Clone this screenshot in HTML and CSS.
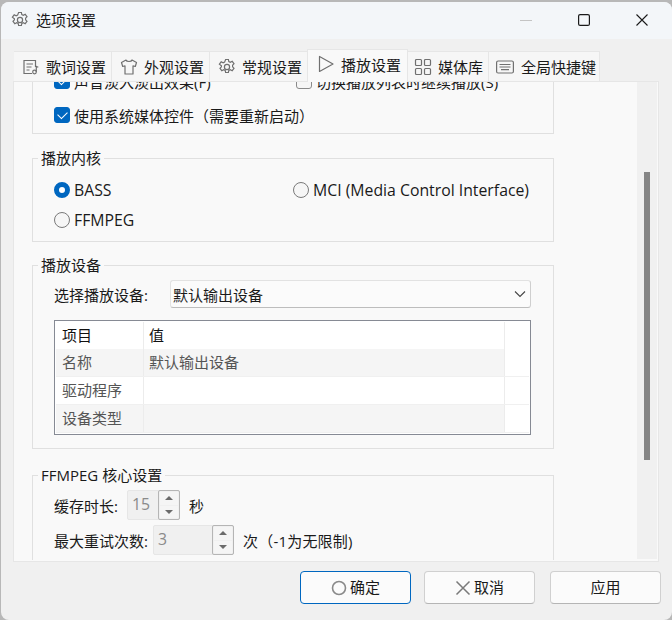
FILE: index.html

```html
<!DOCTYPE html>
<html lang="zh-CN">
<head>
    <meta charset="UTF-8">
    <title>选项设置</title>
    <link rel="stylesheet" href="styles.css">
</head>
<body>
    <div class="window">
        <div class="titlebar">
            <svg class="title-icon" width="18" height="18" viewBox="0 0 18 18"><path d="M7.600 1.500h2.800l.4 2.100 1.500.7 1.900-1 1.800 2.400-1.400 1.500v1.600l1.400 1.500-1.800 2.400-1.900-1-1.500.7-.4 2.100H7.600l-.4-2.100-1.500-.7-1.900 1-1.800-2.400 1.400-1.500V7.700L1.400 6.200l1.800-2.400 1.900 1 1.500-.7z" fill="none" stroke="#707070" stroke-width="1.200"/><circle cx="9" cy="9" r="2.600" fill="none" stroke="#707070" stroke-width="1.200"/></svg>
            <span class="title-text">选项设置</span>
            <div class="win-buttons">
                <svg width="12" height="12" viewBox="0 0 12 12"><path d="M0 6.500h12" stroke="#c4c4c4" stroke-width="1"/></svg>
                <svg width="12" height="12" viewBox="0 0 12 12"><rect x=".6" y=".6" width="10.800" height="10.800" rx="1.500" fill="none" stroke="#1a1a1a" stroke-width="1.200"/></svg>
                <svg width="12" height="12" viewBox="0 0 12 12"><path d="M.5.5l11 11M11.500.5l-11 11" stroke="#1a1a1a" stroke-width="1.100"/></svg>
            </div>
        </div>

        <div class="tabs">
            <div class="tab">
                <svg width="18" height="18" viewBox="0 0 18 18" fill="none" stroke="#707070" stroke-width="1.200"><path d="M10 15.500H2V2.500h11.500V9M4.500 6h6.500M4.500 9h5M4.500 12h3"/><circle cx="12.500" cy="14" r="1.800"/><path d="M14.300 14V8.500l2 .8"/></svg>
                <span>歌词设置</span>
            </div>
            <div class="tab">
                <svg width="18" height="18" viewBox="0 0 18 18" fill="none" stroke="#707070" stroke-width="1.200"><path d="M6 2L1.500 4.500l1.200 4 2.300-.6V16h8V7.900l2.300.6 1.200-4L12 2c-.5 2-5.500 2-6 0z" stroke-linejoin="round"/></svg>
                <span>外观设置</span>
            </div>
            <div class="tab">
                <svg width="18" height="18" viewBox="0 0 18 18"><path d="M7.600 1.500h2.800l.4 2.100 1.500.7 1.900-1 1.800 2.400-1.400 1.500v1.600l1.400 1.500-1.800 2.400-1.900-1-1.500.7-.4 2.100H7.600l-.4-2.100-1.500-.7-1.900 1-1.800-2.400 1.400-1.500V7.700L1.400 6.200l1.800-2.400 1.900 1 1.500-.7z" fill="none" stroke="#707070" stroke-width="1.200"/><circle cx="9" cy="9" r="2.600" fill="none" stroke="#707070" stroke-width="1.200"/></svg>
                <span>常规设置</span>
            </div>
            <div class="tab tab-active">
                <svg width="18" height="18" viewBox="0 0 18 18" fill="none" stroke="#707070" stroke-width="1.200"><path d="M2.500 1.500v15L16 9z" stroke-linejoin="round"/></svg>
                <span>播放设置</span>
            </div>
            <div class="tab tab-lib">
                <svg width="18" height="18" viewBox="0 0 18 18" fill="none" stroke="#707070" stroke-width="1.200"><rect x="1.500" y="1.500" width="6" height="6" rx="1"/><rect x="10.500" y="1.500" width="6" height="6" rx="1"/><rect x="1.500" y="10.500" width="6" height="6" rx="1"/><rect x="10.500" y="10.500" width="6" height="6" rx="1"/></svg>
                <span>媒体库</span>
            </div>
            <div class="tab tab-keys">
                <svg width="18" height="18" viewBox="0 0 18 18" fill="none" stroke="#707070" stroke-width="1.200"><rect x=".6" y="3" width="16.800" height="12" rx="1.500"/><path d="M3.500 6.500h11M3.500 9h11M5 11.700h8"/></svg>
                <span>全局快捷键</span>
            </div>
        </div>

        <div class="panel">
            <div class="scroll-area">
                <div class="content">
                    <div class="group group-first">
                        <div class="check-row check-row-cut">
                            <label class="check check-left"><i class="box box-on"></i>声音淡入淡出效果(F)</label>
                            <label class="check"><i class="box"></i>切换播放列表时继续播放(S)</label>
                        </div>
                        <label class="check"><i class="box box-on"></i>使用系统媒体控件（需要重新启动）</label>
                    </div>

                    <div class="group group-core">
                        <span class="legend">播放内核</span>
                        <div class="radio-row">
                            <label class="radio radio-left"><i class="dot dot-on"></i>BASS</label>
                            <label class="radio"><i class="dot"></i>MCI (Media Control Interface)</label>
                        </div>
                        <div class="radio-row">
                            <label class="radio"><i class="dot"></i>FFMPEG</label>
                        </div>
                    </div>

                    <div class="group group-device">
                        <span class="legend">播放设备</span>
                        <div class="device-row">
                            <span class="device-label">选择播放设备:</span>
                            <div class="combo">
                                <span>默认输出设备</span>
                                <svg width="12" height="8" viewBox="0 0 12 8"><path d="M1 1.500l5 5 5-5" fill="none" stroke="#444" stroke-width="1.100"/></svg>
                            </div>
                        </div>
                        <div class="list">
                            <div class="list-row list-head"><span class="col-a">项目</span><span class="col-b">值</span><span class="col-c"></span></div>
                            <div class="list-row alt"><span class="col-a">名称</span><span class="col-b">默认输出设备</span><span class="col-c"></span></div>
                            <div class="list-row"><span class="col-a">驱动程序</span><span class="col-b"></span><span class="col-c"></span></div>
                            <div class="list-row alt"><span class="col-a">设备类型</span><span class="col-b"></span><span class="col-c"></span></div>
                        </div>
                    </div>

                    <div class="group group-ffmpeg">
                        <span class="legend">FFMPEG 核心设置</span>
                        <div class="spin-row">
                            <span class="spin-label-short">缓存时长:</span>
                            <div class="spin spin-short"><span class="spin-value">15</span><div class="spin-btns"><b><i class="up"></i></b><b><i class="down"></i></b></div></div>
                            <span class="spin-unit">秒</span>
                        </div>
                        <div class="spin-row spin-row-2">
                            <span class="spin-label-long">最大重试次数:</span>
                            <div class="spin spin-long"><span class="spin-value">3</span><div class="spin-btns"><b><i class="up"></i></b><b><i class="down"></i></b></div></div>
                            <span class="spin-unit spin-unit-wide">次（-1为无限制)</span>
                        </div>
                    </div>
                </div>
            </div>
            <div class="scrollbar"><div class="thumb"></div></div>
        </div>

        <div class="footer">
            <button class="btn btn-default">
                <svg width="16" height="16" viewBox="0 0 16 16"><circle cx="8" cy="8" r="6.500" fill="none" stroke="#8a8a8a" stroke-width="1.600"/></svg>
                确定
            </button>
            <button class="btn">
                <svg width="16" height="16" viewBox="0 0 16 16"><path d="M1.500 1.500l13 13M14.500 1.500l-13 13" stroke="#7a7a7a" stroke-width="1.500"/></svg>
                取消
            </button>
            <button class="btn btn-apply">应用</button>
        </div>
    </div>
</body>
</html>
```

FILE: styles.css

```css
* {
    box-sizing: border-box;
}
html, body {
    margin: 0;
    height: 100%;
    overflow: hidden;
}
body {
    background-color: #b8b8b8;
    font-family: "Open Sans", "Noto Sans CJK SC", sans-serif;
    font-size: 15px;
    color: #1a1a1a;
    padding: 2px 0 0 1px;
}
.window {
    height: 618px;
    background-color: #f0f0f0;
    border-radius: 8px;
    display: flex;
    flex-direction: column;
    overflow: hidden;
}
.titlebar {
    height: 37px;
    flex: none;
    background-color: #f3f6f9;
    display: flex;
    align-items: center;
    padding: 0 0 2px 10px;
}
.title-text {
    margin-left: 7px;
}
.win-buttons {
    margin-left: auto;
    display: flex;
    gap: 46px;
    padding-right: 24px;
}
.tabs {
    flex: none;
    height: 42px;
    display: flex;
    align-items: flex-end;
    padding-left: 13px;
}
.tab {
    width: 98px;
    height: 30px;
    display: flex;
    align-items: center;
    gap: 6px;
    padding: 0 0 0 8px;
    background-color: #f6f6f6;
    border-top: 1px solid #e6e6e6;
    border-right: 1px solid #e6e6e6;
    white-space: nowrap;
}
.tab svg {
    flex: none;
}
.tab-active {
    width: 101px;
    height: 33px;
    margin-left: -1px;
    margin-bottom: -1px;
    padding-left: 9px;
    padding-bottom: 4px;
    background-color: #f9f9f9;
    border-left: 1px solid #e6e6e6;
    position: relative;
    z-index: 1;
}
.tab-lib {
    width: 81px;
    padding-left: 6px;
}
.tab-keys {
    width: 111px;
    padding-left: 7px;
    gap: 7px;
}
.panel {
    flex: none;
    height: 481px;
    margin-left: 12px;
    width: 646px;
    background-color: #f9f9f9;
    border: 1px solid #e6e6e6;
    display: flex;
}
.scroll-area {
    flex: 1;
    overflow: hidden;
    margin-bottom: 1px;
}
.content {
    padding-left: 18px;
    width: 560px;
}
.scrollbar {
    width: 20px;
    flex: none;
    margin: 0 1px 2px 0;
    background-color: #f0f0f0;
    padding: 90px 7px 0;
}
.thumb {
    height: 288px;
    background-color: #858585;
}
.group {
    position: relative;
    border: 1px solid #e0e0e0;
    width: 522px;
}
.group-first {
    border-top: none;
    height: 63px;
    padding-left: 21px;
}
.group-core {
    margin-top: 24px;
    height: 84px;
    padding: 21px 0 0 21px;
}
.group-device {
    margin-top: 23px;
    height: 184px;
    padding: 14px 21px 0;
}
.group-ffmpeg {
    margin-top: 26px;
    height: 120px;
    padding: 14px 21px 0;
    border-bottom: none;
}
.legend {
    position: absolute;
    left: 5px;
    top: -11px;
    padding: 0 3px;
    line-height: 20px;
    background-color: #f9f9f9;
}
.check-row {
    display: flex;
}
.check-row-cut {
    height: 20px;
    margin-top: -11px;
    margin-bottom: 14px;
}
.check {
    display: flex;
    align-items: center;
    gap: 4px;
    height: 20px;
    white-space: nowrap;
}
.check-left {
    width: 242px;
}
.box {
    width: 16px;
    height: 16px;
    flex: none;
    border: 1px solid #8a8a8a;
    border-radius: 3px;
    background-color: #f6f6f6;
}
.box-on {
    background-color: #0067c0;
    border-color: #0067c0;
    position: relative;
}
.box-on::after {
    content: "";
    position: absolute;
    left: 3px;
    top: 3px;
    width: 8px;
    height: 5px;
    border-left: 1.200px solid #fff;
    border-bottom: 1.200px solid #fff;
    transform: rotate(-45deg);
}
.radio-row {
    display: flex;
    height: 20px;
    margin-bottom: 10px;
}
.radio {
    display: flex;
    align-items: center;
    gap: 4px;
    white-space: nowrap;
    font-size: 15.800px;
}
.radio-left {
    width: 239px;
}
.dot {
    width: 16px;
    height: 16px;
    flex: none;
    border: 1px solid #7a7a7a;
    border-radius: 50%;
    background-color: #f6f6f6;
}
.dot-on {
    border: 5px solid #0067c0;
    background-color: #fff;
}
.device-row {
    display: flex;
    align-items: center;
}
.device-label {
    width: 116px;
    flex: none;
}
.combo {
    width: 361px;
    height: 28px;
    background-color: #fbfbfb;
    border: 1px solid #e2e2e2;
    border-bottom-color: #bdbdbd;
    border-right-color: #cfcfcf;
    border-radius: 3px;
    display: flex;
    align-items: center;
    justify-content: space-between;
    padding: 0 4px 0 2px;
}
.list {
    margin-top: 12px;
    width: 477px;
    height: 115px;
    background-color: #fff;
    border: 1px solid #868a94;
    padding: 1px;
}
.list-row {
    display: flex;
    height: 28px;
    color: #555;
    border-bottom: 1px solid #f0f0f0;
}
.list-head {
    color: #111;
    height: 27px;
    border-bottom: none;
}
.alt {
    background: linear-gradient(to right, #f5f5f5 449px, #fff 449px);
}
.col-a {
    width: 88px;
    flex: none;
    padding-left: 6px;
    line-height: 27px;
    border-right: 1px solid #ececec;
}
.col-b {
    width: 361px;
    flex: none;
    padding-left: 5px;
    line-height: 27px;
    border-right: 1px solid #ececec;
}
.col-c {
    flex: 1;
}
.spin-row {
    display: flex;
    align-items: center;
    height: 30px;
}
.spin-row-2 {
    margin-top: 5px;
}
.spin-label-short {
    width: 73px;
    flex: none;
}
.spin-label-long {
    width: 99px;
    flex: none;
}
.spin {
    height: 30px;
    display: flex;
    background-color: #f0f0f0;
    border: 1px solid #e6e6e6;
    border-radius: 2px;
    color: #8a8a8a;
}
.spin-short {
    width: 53px;
}
.spin-long {
    width: 81px;
}
.spin-value {
    flex: 1;
    padding-left: 4px;
    line-height: 27px;
    font-size: 15.800px;
}
.spin-btns {
    width: 22px;
    flex: none;
    display: flex;
    flex-direction: column;
    border: 1px solid #b5b5b5;
    margin: -1px -1px -1px 0;
    border-radius: 2px;
    padding: 1px;
    gap: 1px;
}
.spin-btns b {
    flex: 1;
    background-color: #f5f5f5;
    display: flex;
    align-items: center;
    justify-content: center;
}
.up, .down {
    width: 0;
    height: 0;
    border-left: 4px solid transparent;
    border-right: 4px solid transparent;
}
.up {
    border-bottom: 4px solid #6b6b6b;
}
.down {
    border-top: 4px solid #6b6b6b;
}
.spin-unit {
    margin-left: 9px;
}
.spin-unit-wide {
    letter-spacing: .2px;
}
.footer {
    flex: 1;
    display: flex;
    justify-content: flex-end;
    gap: 13px;
    padding: 9px 11px 0 0;
}
.btn {
    width: 111px;
    height: 33px;
    background-color: #fbfbfb;
    border: 1px solid #d0d0d0;
    border-bottom-color: #b5b5b5;
    border-radius: 4px;
    font-family: inherit;
    font-size: 15px;
    color: #1a1a1a;
    display: flex;
    align-items: center;
    justify-content: center;
    gap: 3px;
    padding: 0 0 2px;
}
.btn svg {
    margin-top: 2px;
}
.btn-default {
    border-color: #0067c0;
}
.btn-apply {
    margin-left: 2px;
}
```
